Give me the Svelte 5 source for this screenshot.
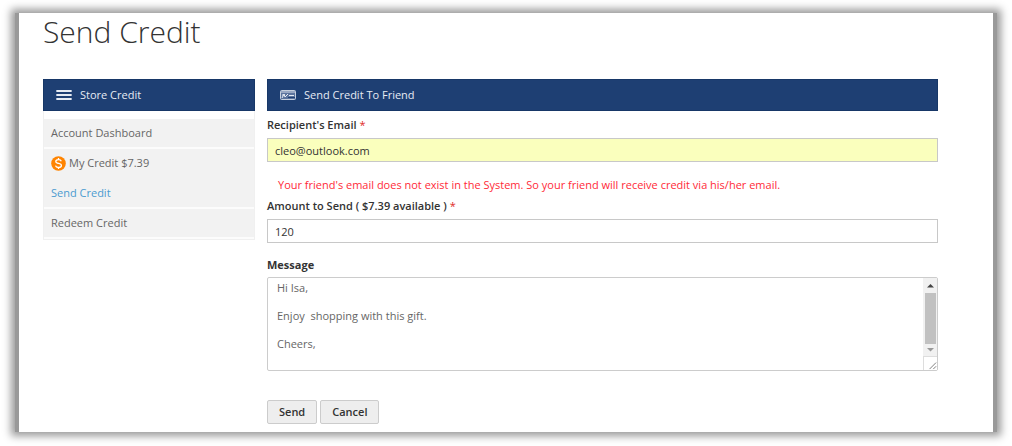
<script>
  let email = $state('cleo@outlook.com');
  let amount = $state('120');
  let message = $state('Hi Isa,\n\nEnjoy  shopping with this gift.\n\nCheers,\n');
</script>

<div class="frame">
  <main>
    <h1>Send Credit</h1>
    <div class="columns">
      <aside>
        <h2 class="bar">
          <svg width="16" height="10" viewBox="0 0 16 10" aria-hidden="true">
            <path d="M1 1h14M1 5h14M1 9h14" stroke="#e6ebf3" stroke-width="1.8" stroke-linecap="round" />
          </svg>
          Store Credit
        </h2>
        <nav>
          <a href="#dashboard">Account Dashboard</a>
          <a href="#credit" class="joined">
            <svg width="15" height="15" viewBox="0 0 15 15" aria-hidden="true">
              <circle cx="7.5" cy="7.5" r="7.3" fill="#ff8400" />
              <path d="M10.3 5.2C9.9 4.1 8.9 3.6 7.5 3.6c-1.6 0-2.7.7-2.7 1.9 0 2.8 5.6 1.1 5.6 4 0 1.200-1.200 2-2.900 2-1.600 0-2.700-.7-3-1.900M7.500 2v2M7.500 11v2" fill="none" stroke="#fff" stroke-width="1.3" />
            </svg>
            My Credit $7.39
          </a>
          <a href="#send" class="current">Send Credit</a>
          <a href="#redeem">Redeem Credit</a>
        </nav>
      </aside>

      <form onsubmit={(e) => e.preventDefault()}>
        <h2 class="bar">
          <svg width="16" height="10" viewBox="0 0 16 10" aria-hidden="true">
            <rect x="0.500" y="0.500" width="15" height="9" rx="1" fill="#5b739d" stroke="#c5cfde" />
            <path d="M1 2h14" stroke="#d5dce8" />
            <path d="M2 8l2-4 1 3 3-3M2 5h3M9 5.500h5" fill="none" stroke="#e6ebf3" />
            <path d="M8 7.500h7" stroke="#1e3f73" />
          </svg>
          Send Credit To Friend
        </h2>
        <label for="email">Recipient's Email <em>*</em></label>
        <input id="email" class="filled" type="text" bind:value={email} />
        <p class="notice">Your friend's email does not exist in the System. So your friend will receive credit via his/her email.</p>
        <label for="amount">Amount to Send ( $7.39 available ) <em>*</em></label>
        <input id="amount" type="text" bind:value={amount} />
        <label for="message" class="strong">Message</label>
        <div class="area">
          <textarea id="message" bind:value={message}></textarea>
          <div class="scroll" aria-hidden="true">
            <svg width="13" height="15" viewBox="0 0 13 15"><path d="M3 9.500L6.500 6 10 9.500z" fill="#444" /></svg>
            <span class="thumb"></span>
            <svg width="13" height="12" viewBox="0 0 13 12"><path d="M3 4L6.500 7.500 10 4z" fill="#999" /></svg>
            <svg class="grip" width="14" height="14" viewBox="0 0 14 14"><path d="M6 13L13 6M10 13l3-3" stroke="#777" /></svg>
          </div>
        </div>
        <div class="actions">
          <button type="submit">Send</button>
          <button type="button">Cancel</button>
        </div>
      </form>
    </div>
  </main>
</div>

<style>
  :global(body) {
    margin: 0;
    background: #fff;
  }
  :global(#app) {
    display: flow-root;
  }
  .frame, .frame * {
    box-sizing: border-box;
  }
  .frame {
    margin: 13px 15px 14px;
    padding: 0 4px;
    background: #999;
    box-shadow: 0 0 8px 4px #999;
    font: 11px/14px "Open Sans", sans-serif;
    color: #666;
  }
  main {
    padding: 0 55px 8px 24px;
    background: #fff;
  }
  h1 {
    margin: 0;
    padding-bottom: 28px;
    font-size: 30px;
    line-height: 38px;
    font-weight: 300;
    color: #333;
  }
  .columns {
    display: grid;
    grid-template-columns: 212px 1fr;
    gap: 12px;
    align-items: start;
  }
  .bar {
    display: flex;
    align-items: center;
    gap: 8px;
    height: 32px;
    margin: 0;
    padding: 0 12px;
    background: #1e3f73;
    border: 1px solid #173767;
    color: #e6ebf3;
    font-size: 11px;
    font-weight: 400;
  }
  nav {
    padding-top: 8px;
    border: 1px solid #f0f0f0;
    border-top: 0;
  }
  nav a {
    display: flex;
    align-items: center;
    gap: 3px;
    height: 30px;
    padding: 0 7px;
    background: #f2f2f2;
    border-bottom: 2px solid #fcfcfc;
    color: #666;
    text-decoration: none;
  }
  nav .joined {
    border-bottom-color: #f2f2f2;
  }
  nav .current {
    color: #4b9bd0;
  }
  form {
    display: flex;
    flex-direction: column;
  }
  label {
    padding: 7px 0 6px;
    font-weight: 600;
    color: #333;
  }
  label.strong {
    padding: 15px 0 5px;
    font-weight: 700;
  }
  em {
    color: #e02b27;
    font-style: normal;
    font-weight: 400;
  }
  input {
    height: 24px;
    padding: 0 7px;
    border: 1px solid #c8c8c8;
    background: #fff;
    font: inherit;
    color: #333;
  }
  .filled {
    background: #faffbd;
  }
  .notice {
    margin: 0;
    padding: 16px 11px 0;
    color: #ff2a38;
  }
  .area {
    display: flex;
    height: 94px;
    border: 1px solid #ccc;
    border-radius: 2px;
  }
  textarea {
    flex: 1;
    padding: 3px 9px;
    border: 0;
    background: none;
    resize: none;
    overflow: hidden;
    font: inherit;
    color: #666;
  }
  .scroll {
    display: flex;
    flex-direction: column;
    align-items: center;
    width: 14px;
    background: #f1f1f1;
  }
  .scroll svg {
    flex: none;
  }
  .thumb {
    flex: 1;
    width: 11px;
    background: #c1c1c1;
  }
  .grip {
    background: #fff;
    border-top: 1px solid #ddd;
    border-left: 1px solid #ddd;
  }
  .actions {
    display: flex;
    gap: 3px;
    padding-top: 29px;
  }
  button {
    height: 24px;
    padding: 0 11px;
    border: 1px solid #ccc;
    border-radius: 2px;
    background: #eee;
    font: inherit;
    font-weight: 600;
    color: #333;
  }
</style>
